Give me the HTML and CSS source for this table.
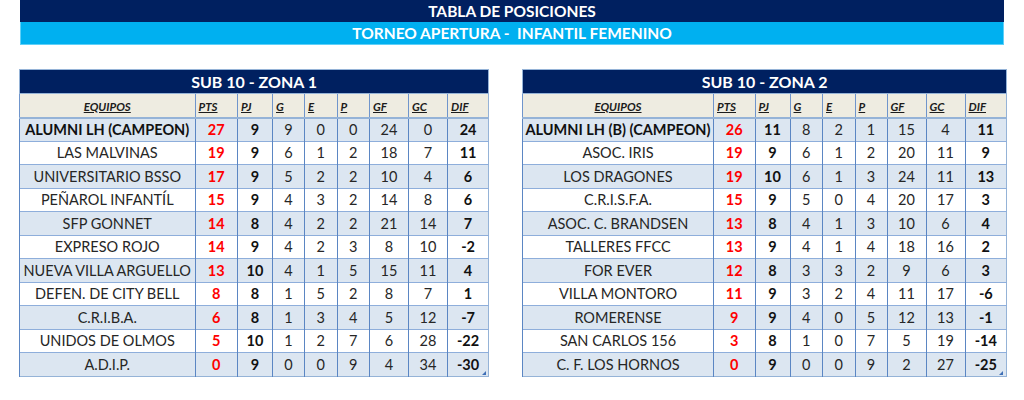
FILE: index.html
```html
<!DOCTYPE html>
<html lang="es">
<head>
<meta charset="utf-8">
<title>Tabla de posiciones</title>
<link rel="stylesheet" href="styles.css">
</head>
<body>
<div class="page">
  <header class="banner">
    <div class="bar-title">TABLA DE POSICIONES</div>
    <div class="bar-sub">TORNEO APERTURA -  INFANTIL FEMENINO</div>
  </header>
  <div class="zones">
    <div class="zone-wrap zone-1">
      <table class="zone">
        <colgroup>
          <col class="c-team"><col class="c-pts"><col class="c-pj"><col class="c-g"><col class="c-e"><col class="c-p"><col class="c-gf"><col class="c-gc"><col class="c-dif">
        </colgroup>
        <thead>
          <tr class="title-row"><th colspan="9">SUB 10 - ZONA 1</th></tr>
          <tr class="head-row"><th class="h-team">EQUIPOS</th><th>PTS</th><th>PJ</th><th>G</th><th>E</th><th>P</th><th>GF</th><th>GC</th><th>DIF</th></tr>
        </thead>
        <tbody>
          <tr class="champ"><td>ALUMNI LH (CAMPEON)</td><td class="pts">27</td><td class="pj">9</td><td>9</td><td>0</td><td>0</td><td>24</td><td>0</td><td class="dif">24</td></tr>
          <tr><td>LAS MALVINAS</td><td class="pts">19</td><td class="pj">9</td><td>6</td><td>1</td><td>2</td><td>18</td><td>7</td><td class="dif">11</td></tr>
          <tr><td>UNIVERSITARIO BSSO</td><td class="pts">17</td><td class="pj">9</td><td>5</td><td>2</td><td>2</td><td>10</td><td>4</td><td class="dif">6</td></tr>
          <tr><td>PEÑAROL INFANTÍL</td><td class="pts">15</td><td class="pj">9</td><td>4</td><td>3</td><td>2</td><td>14</td><td>8</td><td class="dif">6</td></tr>
          <tr><td>SFP GONNET</td><td class="pts">14</td><td class="pj">8</td><td>4</td><td>2</td><td>2</td><td>21</td><td>14</td><td class="dif">7</td></tr>
          <tr><td>EXPRESO ROJO</td><td class="pts">14</td><td class="pj">9</td><td>4</td><td>2</td><td>3</td><td>8</td><td>10</td><td class="dif">-2</td></tr>
          <tr><td>NUEVA VILLA ARGUELLO</td><td class="pts">13</td><td class="pj">10</td><td>4</td><td>1</td><td>5</td><td>15</td><td>11</td><td class="dif">4</td></tr>
          <tr><td>DEFEN. DE CITY BELL</td><td class="pts">8</td><td class="pj">8</td><td>1</td><td>5</td><td>2</td><td>8</td><td>7</td><td class="dif">1</td></tr>
          <tr><td>C.R.I.B.A.</td><td class="pts">6</td><td class="pj">8</td><td>1</td><td>3</td><td>4</td><td>5</td><td>12</td><td class="dif">-7</td></tr>
          <tr><td>UNIDOS DE OLMOS</td><td class="pts">5</td><td class="pj">10</td><td>1</td><td>2</td><td>7</td><td>6</td><td>28</td><td class="dif">-22</td></tr>
          <tr><td>A.D.I.P.</td><td class="pts">0</td><td class="pj">9</td><td>0</td><td>0</td><td>9</td><td>4</td><td>34</td><td class="dif">-30</td></tr>
        </tbody>
      </table>
    </div>
    <div class="zone-wrap zone-2">
      <table class="zone">
        <colgroup>
          <col class="c-team"><col class="c-pts"><col class="c-pj"><col class="c-g"><col class="c-e"><col class="c-p"><col class="c-gf"><col class="c-gc"><col class="c-dif">
        </colgroup>
        <thead>
          <tr class="title-row"><th colspan="9">SUB 10 - ZONA 2</th></tr>
          <tr class="head-row"><th class="h-team">EQUIPOS</th><th>PTS</th><th>PJ</th><th>G</th><th>E</th><th>P</th><th>GF</th><th>GC</th><th>DIF</th></tr>
        </thead>
        <tbody>
          <tr class="champ"><td>ALUMNI LH (B) (CAMPEON)</td><td class="pts">26</td><td class="pj">11</td><td>8</td><td>2</td><td>1</td><td>15</td><td>4</td><td class="dif">11</td></tr>
          <tr><td>ASOC. IRIS</td><td class="pts">19</td><td class="pj">9</td><td>6</td><td>1</td><td>2</td><td>20</td><td>11</td><td class="dif">9</td></tr>
          <tr><td>LOS DRAGONES</td><td class="pts">19</td><td class="pj">10</td><td>6</td><td>1</td><td>3</td><td>24</td><td>11</td><td class="dif">13</td></tr>
          <tr><td>C.R.I.S.F.A.</td><td class="pts">15</td><td class="pj">9</td><td>5</td><td>0</td><td>4</td><td>20</td><td>17</td><td class="dif">3</td></tr>
          <tr><td>ASOC. C. BRANDSEN</td><td class="pts">13</td><td class="pj">8</td><td>4</td><td>1</td><td>3</td><td>10</td><td>6</td><td class="dif">4</td></tr>
          <tr><td>TALLERES FFCC</td><td class="pts">13</td><td class="pj">9</td><td>4</td><td>1</td><td>4</td><td>18</td><td>16</td><td class="dif">2</td></tr>
          <tr><td>FOR EVER</td><td class="pts">12</td><td class="pj">8</td><td>3</td><td>3</td><td>2</td><td>9</td><td>6</td><td class="dif">3</td></tr>
          <tr><td>VILLA MONTORO</td><td class="pts">11</td><td class="pj">9</td><td>3</td><td>2</td><td>4</td><td>11</td><td>17</td><td class="dif">-6</td></tr>
          <tr><td>ROMERENSE</td><td class="pts">9</td><td class="pj">9</td><td>4</td><td>0</td><td>5</td><td>12</td><td>13</td><td class="dif">-1</td></tr>
          <tr><td>SAN CARLOS 156</td><td class="pts">3</td><td class="pj">8</td><td>1</td><td>0</td><td>7</td><td>5</td><td>19</td><td class="dif">-14</td></tr>
          <tr><td>C. F. LOS HORNOS</td><td class="pts">0</td><td class="pj">9</td><td>0</td><td>0</td><td>9</td><td>2</td><td>27</td><td class="dif">-25</td></tr>
        </tbody>
      </table>
    </div>
  </div>
</div>
</body>
</html>
```
FILE: styles.css
```css
* { box-sizing: border-box; }
html, body { margin: 0; padding: 0; background: #fff; }
body {
  font-family: Lato, "Liberation Sans", sans-serif;
  color: #1c1c1c;
}
.page {
  width: 1024px;
  padding: 0 20px 0 20px;
}
.banner {
  width: 984px;
}
.bar-title {
  height: 22px;
  background: #002060;
  color: #fff;
  font-weight: 700;
  font-size: 15.5px;
  line-height: 22px;
  text-align: center;
}
.bar-sub {
  height: 23px;
  background: #00b0f0;
  border: 1px solid #5fd0f8;
  border-top: none;
  color: #fff;
  font-weight: 700;
  font-size: 15.5px;
  line-height: 22px;
  text-align: center;
  white-space: pre;
}
.zones {
  display: flex;
  gap: 34px;
  margin-top: 24px;
  margin-left: -1px;
}
.zone-wrap {
  position: relative;
}
.zone-wrap::after {
  content: "";
  position: absolute;
  right: 2px;
  bottom: 2px;
  width: 0;
  height: 0;
  border-left: 4px solid transparent;
  border-bottom: 4px solid #3f6fb6;
}
.zone-1 { width: 469px; }
.zone-2 { width: 483px; }
.zone {
  width: 100%;
  table-layout: fixed;
  border-collapse: collapse;
  border: 1.5px solid #95b3d7;
}
.zone-1 .c-team { width: 175.5px; }
.zone-1 .c-pts { width: 42.5px; }
.zone-1 .c-pj { width: 35px; }
.zone-1 .c-g { width: 32px; }
.zone-1 .c-e { width: 32.5px; }
.zone-1 .c-p { width: 32.5px; }
.zone-1 .c-gf { width: 39px; }
.zone-1 .c-gc { width: 39px; }
.zone-1 .c-dif { width: 41px; }
.zone-2 .c-team { width: 191px; }
.zone-2 .c-pts { width: 41.5px; }
.zone-2 .c-pj { width: 35px; }
.zone-2 .c-g { width: 32.5px; }
.zone-2 .c-e { width: 32.5px; }
.zone-2 .c-p { width: 32px; }
.zone-2 .c-gf { width: 39px; }
.zone-2 .c-gc { width: 39px; }
.zone-2 .c-dif { width: 41.5px; }

.title-row th {
  height: 24px;
  background: #002060;
  color: #fff;
  font-size: 16px;
  font-weight: 700;
  text-align: center;
  padding: 0;
  border: 1.5px solid #95b3d7;
  border-bottom: 1px solid #95b3d7;
}
.head-row th {
  height: 24px;
  background: #eeece1;
  font-size: 11.5px;
  font-weight: 700;
  font-style: italic;
  text-decoration: underline;
  text-align: left;
  padding: 2px 0 0 3px;
  border-left: 1px solid #6f95cc;
  border-bottom: 2px solid #95b3d7;
  color: #1c1c1c;
}
.head-row th.h-team {
  text-align: center;
  padding-left: 0;
}
tbody td {
  height: 23.5px;
  padding: 0;
  text-align: center;
  font-size: 14.5px;
  border-left: 1px solid #5b86c3;
  border-top: 1px solid #8eaedb;
  white-space: nowrap;
  overflow: hidden;
  color: #262626;
}
tbody tr:nth-child(odd) td { background: #dce6f1; }
tbody tr:nth-child(even) td { background: #fff; }
tbody td.pts { color: #ff0000; font-weight: 700; }
tbody td.pj { font-weight: 700; color: #111; }
tbody td.dif { font-weight: 700; color: #111; }
tbody tr.champ td:first-child { font-weight: 700; color: #111; }
```
